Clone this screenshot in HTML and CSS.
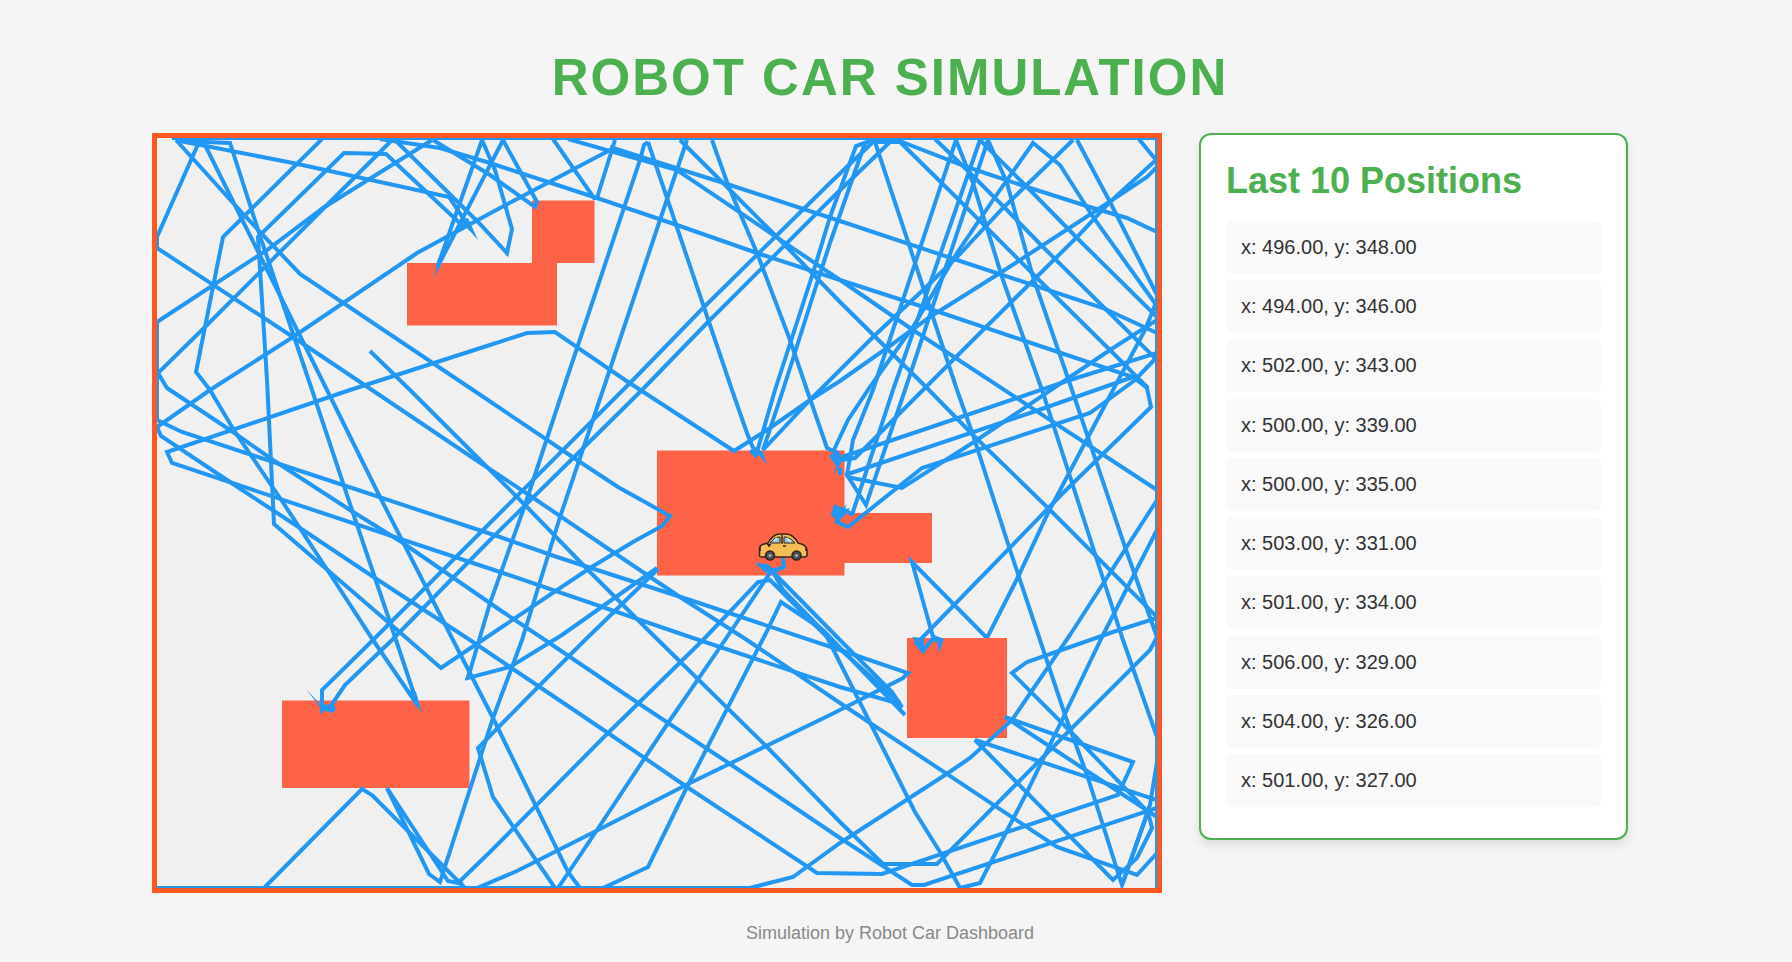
FILE: index.html
```html
<!DOCTYPE html>
<html lang="en">
<head>
<meta charset="utf-8">
<title>Robot Car Simulation</title>
<link rel="stylesheet" href="styles.css">
</head>
<body>
<h1 class="title">Robot Car Simulation</h1>
<main class="layout">
  <svg class="arena" viewBox="157 138 1000 750" role="img" aria-label="Robot car path">
    <g class="obstacles">
      <rect x="407" y="263" width="150" height="62.5"/>
      <rect x="532" y="200.500" width="62.5" height="62.5"/>
      <rect x="657" y="450.5" width="187.5" height="125"/>
      <rect x="844" y="513" width="88" height="50"/>
      <rect x="907" y="638" width="100" height="100"/>
      <rect x="282" y="700.5" width="187.5" height="87.5"/>
    </g>
    <g class="trail">
      <path d="M172 138H1157V888M157 888H750M157 322V420"/>
      <path d="M176 140L244 215L300 274L473 390L580 462L618 487L670 516L662 526L633 542L590 568L490 635L441 668L388 622L274 524L267 380L258 237L344 153L386 154L465 228"/>
      <path d="M471 230L449 197L293 163L180 141L230 143L261 239L312 390L353 513L395 637L418 706L373 640L332 577L280 498L235 432L210 390L196 372L223 237L322 139"/>
      <path d="M204 143L323 382L380 497L453 640L493 718L568 872L580 888"/>
      <path d="M199 142L157 237V248L293 337L372 390L473 458L532 497L613 552L680 597L747 640L840 703L1057 847L1137 875L1157 853"/>
      <path d="M370 351L410 390L483 463L525 505L590 572L653 635L767 747L840 822L883 864H937L1070 730L1150 650L1157 637"/>
      <path d="M432 140L323 208L267 250L157 322"/>
      <path d="M392 140L310 222L205 327L158 373L167 388L233 432L273 460L350 510L403 543L500 610L545 640L638 703L730 764L840 838L912 885H924L1157 808"/>
      <path d="M395 140L478 222L507 253L512 229L495 170L482 140L438 265M437 268L503 140L537 202L535 207L490 175L433 140"/>
      <path d="M380 139L440 148L490 163L597 198L677 225L757 253L840 280L933 310L1043 347L1133 377L1147 388L1151 407L1063 493L920 640"/>
      <path d="M610 150L500 208L417 253L293 337L210 390L157 427L161 436L230 482L303 530L375 578L470 640L510 667L608 733L687 787L817 873L882 874L1118 795L1133 762L1005 717L1157 817"/>
      <path d="M568 139L677 170L840 280L913 330L1157 490"/>
      <path d="M610 147L657 162L730 185L840 221L957 260L1103 308L1157 333"/>
      <path d="M553 139L594 198H597L615 140"/>
      <path d="M648 142L644 145L640 160L563 390L525 505L490 603L468 678L510 667L562 635L657 568"/>
      <path d="M648 142L667 198L732 390L747 433L753 448"/>
      <path d="M687 140L660 220L603 390L560 517L522 640L493 718L440 882L429 874L387 788L448 881L463 884"/>
      <path d="M680 140L723 183L777 237L840 302L927 388L973 435L1050 510L1157 617"/>
      <path d="M712 140L728 185L757 253L790 340L807 390L827 448L836 452"/>
      <path d="M873 142L830 183L703 308L633 380L490 523L373 640L322 690V708"/>
      <path d="M890 142L830 200L708 322L642 390L490 540L392 640L345 685L330 707"/>
      <path d="M873 140L856 146L830 217L813 273L775 390L757 452"/>
      <path d="M865 143L830 243L818 280L783 390L763 450L810 400L873 337L923 290L957 257L1003 208L1073 140"/>
      <path d="M477 888L517 871L598 830L690 783L830 715L903 678L908 673L840 650L690 600L557 557L500 537L343 485L182 432L157 420"/>
      <path d="M902 708L897 703L840 687L690 637L500 572L172 463L167 452L350 390L490 345L527 333L555 332L625 380L734 451L767 430L810 400L840 381L887 348L930 317L1000 273L1097 210L1147 177L1157 167"/>
      <path d="M658 569L585 640L538 687L478 748L493 797L555 888"/>
      <path d="M264 888L362 789L372 795L410 833L465 888"/>
      <path d="M459 882L490 852L608 733L703 640L758 582L770 580L830 640L900 703"/>
      <path d="M770 573L725 640L668 723L597 830L558 888"/>
      <path d="M603 888L648 867L687 787L765 635L781 602L823 630L905 715"/>
      <path d="M773 572L783 590L825 633L915 812L940 852L960 888L980 883L1027 792L1063 718L1103 635L1157 530"/>
      <path d="M773 572L840 640L892 692L902 707"/>
      <path d="M750 888L793 877L840 843L945 775L970 758L1012 720L1070 635L1157 500"/>
      <path d="M875 142L925 293L957 390L973 435L1010 550L1040 640L1065 715L1087 775L1122 885L1150 805L1157 762"/>
      <path d="M1122 885L1148 812"/>
      <path d="M956 140L873 390L853 440L847 475"/>
      <path d="M956 140L973 183L1003 280L1042 390L1097 560L1123 640L1157 737"/>
      <path d="M988 140L1007 183L1033 277L1072 390L1125 547L1157 637"/>
      <path d="M980 140L893 390L852 515M988 140L905 390L866 505L847 475"/>
      <path d="M833 452L848 420L870 387L913 327L957 253L993 200L1033 143L1060 165L1093 217L1157 306"/>
      <path d="M1077 140L1110 202L1157 295"/>
      <path d="M980 140L1027 187L1077 238L1157 317"/>
      <path d="M935 139L967 170L1005 208L1043 247L1157 360"/>
      <path d="M898 140L957 198L1037 278L1113 353L1148 388"/>
      <path d="M873 142H902L967 167L1027 187L1093 208L1127 218L1157 232"/>
      <path d="M1138 138L1156 160L1110 202L1077 237L983 330L923 390L855 458L842 460"/>
      <path d="M1157 320L1110 350L1070 377L977 440L902 488L847 477"/>
      <path d="M1157 353L1070 380L967 415L842 457"/>
      <path d="M1133 377L1033 412L845 475"/>
      <path d="M1157 357L1135 380L1090 413L922 468L848 527L835 521"/>
      <path d="M1157 300L1145 330L1113 390L1068 475L1048 513L1018 577L988 636H985L912 562L933 637"/>
      <path d="M1157 618L1113 632L1027 662L1012 673L1070 731L1148 812L1152 828L1137 858L1113 880L975 740L1157 800"/>
      <path d="M753 448L760 453M326 710L333 708M831 455L841 462M836 505L833 514L840 521M838 508L848 512L853 515M840 475V468M915 641L923 651L934 637L940 642M783 558L784 567L773 571"/>
    </g>
    <path class="tips" d="M306 689L320 704L334 705L336 710L332 713L326 710L320 714L320 707ZM416 692L422 714L408 690ZM478 240L460 220L468 218ZM434 279L438 260L448 246ZM749 451L753 448L763 452L767 465L759 455L755 458ZM829 456L838 450L843 460L834 475L836 466ZM832 511L838 506L842 509L847 504L845 509L850 508L846 513L843 518L837 517ZM755 563L768 564L775 570L785 568L774 574L766 573ZM912 637L924 638L924 651ZM930 641L934 635L944 639L939 653L937 642ZM465 680L474 676L468 670ZM173 138H186V144Z"/>
    <g class="car">
      <path class="car-body" d="M759.500 556V548Q760 545 764 544L768 543Q773 534 780 534H786Q793 534 798 543Q807 545 807 550V555Q807 557 804 557H762Q760 557 759.500 556Z"/>
      <path class="car-glass" d="M770 543Q774 537 779 537H780V543ZM784 537H786Q791 538 795 543H784Z"/>
      <path class="car-shine" d="M774 541L777 538M787 538L791 542"/>
      <path class="car-line" d="M782 535V544M767 544.500H771M768 546H770M783 546H786M760 547V551M806 548V551"/>
      <circle cx="770" cy="555.500" r="4.500"/><circle cx="796.500" cy="555.500" r="4.500"/>
      <circle class="car-hub" cx="770" cy="555.500" r="1.500"/><circle class="car-hub" cx="796.500" cy="555.500" r="1.500"/>
    </g>
  </svg>
  <section class="panel">
    <h2 class="panel-title">Last 10 Positions</h2>
    <ul class="positions">
      <li>x: 496.00, y: 348.00</li>
      <li>x: 494.00, y: 346.00</li>
      <li>x: 502.00, y: 343.00</li>
      <li>x: 500.00, y: 339.00</li>
      <li>x: 500.00, y: 335.00</li>
      <li>x: 503.00, y: 331.00</li>
      <li>x: 501.00, y: 334.00</li>
      <li>x: 506.00, y: 329.00</li>
      <li>x: 504.00, y: 326.00</li>
      <li>x: 501.00, y: 327.00</li>
    </ul>
  </section>
</main>
<footer class="footer">Simulation by Robot Car Dashboard</footer>
</body>
</html>
```
FILE: styles.css
```css
* { box-sizing: border-box; }
body {
  margin: 0;
  padding: 48px 12px 16px 0;
  background: #f5f5f5;
  color: #333;
  font-family: "Liberation Sans", Arial, sans-serif;
}
.title {
  margin: 0 0 25px;
  color: #4caf50;
  font-size: 51px;
  line-height: 60px;
  letter-spacing: 2px;
  text-align: center;
  text-transform: uppercase;
}
.layout {
  display: grid;
  grid-template-columns: minmax(0, 1010px) 429px;
  justify-content: center;
  align-items: start;
  gap: 37px;
}
.arena {
  display: block;
  width: 100%;
  border: 5px solid #ff5722;
  background: #f0f0f0;
}
.obstacles { fill: #ff6347; }
.trail { fill: none; stroke: #2196f3; stroke-width: 4; }
.tips { fill: #2196f3; }
.car { stroke: #33231a; stroke-width: 1.5; fill: #46505a; }
.car-body { fill: #f5bd55; }
.car-glass { fill: #91c7d8; stroke-width: 1; }
.car-shine { stroke: #d5edf3; fill: none; }
.car-line { fill: none; }
.car .car-hub { fill: #a7b0b8; stroke: none; }
.panel {
  padding: 25px 25px 31px;
  border: 2px solid #4caf50;
  border-radius: 12px;
  background: #fff;
  box-shadow: 0 5px 10px rgba(0, 0, 0, 0.1);
}
.panel-title {
  margin: 0 0 20px;
  color: #4caf50;
  font-size: 36px;
  line-height: 41px;
}
.positions {
  display: flex;
  flex-direction: column;
  justify-content: space-between;
  min-height: 586px;
  margin: 0;
  padding: 0;
  list-style: none;
}
.positions li {
  padding: 15px;
  border-radius: 6px;
  background: #f9f9f9;
  font-size: 20px;
  line-height: 23px;
}
.footer {
  margin-top: 30px;
  color: #888;
  font-size: 18px;
  line-height: 20px;
  text-align: center;
}
```
